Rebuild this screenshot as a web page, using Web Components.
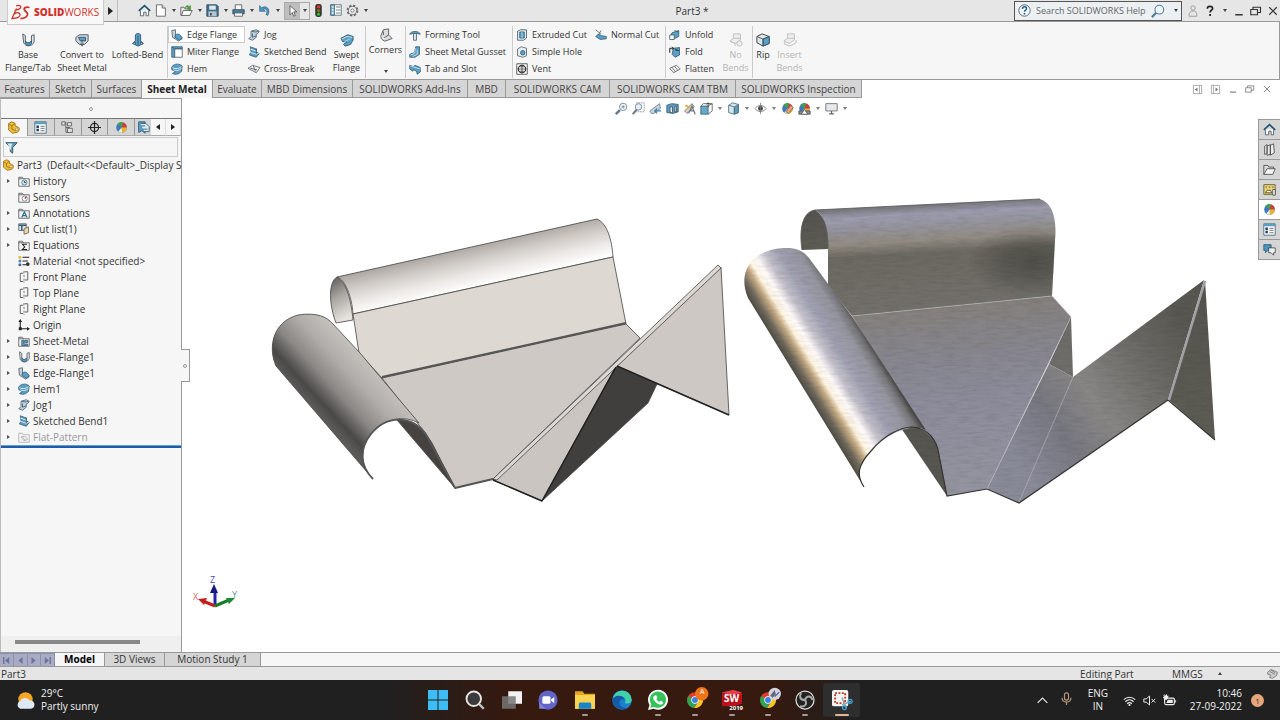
<!DOCTYPE html>
<html lang="en">
<head>
<meta charset="utf-8">
<title>Part3</title>
<style>
html,body{margin:0;height:100%}
body{font-family:"Open Sans","Noto Sans",sans-serif;font-size:10px;color:#333;background:#fff;overflow:hidden}
</style>
</head>
<body>
<cad-app></cad-app>
<script>
const S='fill="none" stroke="#44525c"', B='fill="#5a9fc4" stroke="#2b566f"', W='fill="#fff" stroke="#44525c"';
const chrome='<circle cx="8" cy="8" r="7" fill="#e33b2e"/><path d="M8 8L2 4.400A7 7 0 0 0 7 15l4-6z" fill="#30a452"/><path d="M8 4.800h6.300A7 7 0 0 1 7.400 15L11 9.500z" fill="#f9c722"/><circle cx="8" cy="8" r="3.300" fill="#fff"/><circle cx="8" cy="8" r="2.600" fill="#3c7fe8"/>';
const ball='<circle cx="8" cy="8" r="6.500" fill="#3b78c4"/><path d="M8 8L3 3.500A6.500 6.500 0 0 1 10 1.700z" fill="#3fa34a"/><path d="M8 8l2-6.300A6.500 6.500 0 0 1 14.500 8z" fill="#d93a34"/><path d="M8 8h6.500A6.500 6.500 0 0 1 9 14.500z" fill="#e7b52d"/><path d="M8 8l1 6.500A6.500 6.500 0 0 1 4 13z" fill="#f4eccb"/>';
const folder='<path d="M1 3h5l1 2h8v10H1z" fill="#f4f4f4" stroke="#4c4c4c"/><path d="M1 5h6" stroke="#4c4c4c"/>';
const ICONS={
home:`<path d="M3 8v6.500h4V10h3v4.500h3V8" ${W}/><path d="M1 8.500L8 2l7 6.500" fill="none" stroke="#1d5673" stroke-width="2"/>`,
new:'<path d="M3 1h7l4 4v10H3z" fill="#fff" stroke="#555"/><path d="M10 1v4h4" fill="#ddd" stroke="#555"/>',
open:'<path d="M1 4h4l1 2h6v8H1z" fill="#e8e8e8" stroke="#555"/><path d="M4 8h11l-3 6H2z" fill="#fff" stroke="#555"/><path d="M6 5c1-3 4-4 5-2l2-1v5l-4-1 1-1c-1-2-3-1-4 0z" fill="#49a536" stroke="#2a7420" stroke-width=".5"/>',
save:`<path d="M1 1h12l2 2v12H1z" fill="#3f6f8b" stroke="#2a4655"/><path d="M4 2h8v5H4z" fill="#dde9f0"/><path d="M3 9h10v6H3z" fill="#b6c4cc"/><path d="M5 11h2v3H5z" fill="#345"/>`,
print:`<path d="M4 7V1h8v6" ${W}/><path d="M1 7h14v5H1z" fill="#4c7f9c" stroke="#27485a"/><path d="M3 11h10v4H3z" fill="#fff" stroke="#44525c"/>`,
undo:'<path d="M2 2v7h7L6.500 6.700C10 5 12.500 8 10 13l2 1C16 7 11 1 4.500 4.500z" fill="#4f98bf" stroke="#28617f" stroke-width=".8"/>',
cursor:'<path d="M4 1v12l3-3 2 5 2-1-2-5h4z" fill="#fff" stroke="#444"/>',
traffic:'<rect x="4" y="0" width="8" height="16" rx="3" fill="#333"/><circle cx="8" cy="3.500" r="2" fill="#e33"/><circle cx="8" cy="8" r="2" fill="#777722"/><circle cx="8" cy="12.500" r="2" fill="#3b3"/>',
props:'<path d="M1 1h14v14H1z" fill="#fff" stroke="#3a6074"/><path d="M1 1h5v14H1z" fill="#7db3d0" stroke="#3a6074"/><path d="M2.500 4h2M2.500 8h2M2.500 12h2" stroke="#fff" stroke-width="2"/><path d="M8 4h6M8 8h6M8 12h6" stroke="#555"/>',
gear:'<circle cx="8" cy="8" r="6" fill="none" stroke="#666" stroke-width="2.500" stroke-dasharray="2.700 2"/><circle cx="8" cy="8" r="5" fill="#eee" stroke="#666"/><circle cx="8" cy="8" r="2" fill="#fff" stroke="#666"/>',
help:'<circle cx="8" cy="8" r="7" fill="#f4fafd" stroke="#3b4c58"/><path d="M5.500 6c0-3.500 5-3 5-.5 0 2-2.500 2-2.500 4" fill="none" stroke="#2b6389" stroke-width="1.800"/><path d="M7 11h2v2H7z" fill="#2b6389"/>',
mag:'<path d="M6.500 9.500L1 15" stroke="#537c96" stroke-width="2.500"/><circle cx="9.500" cy="6.500" r="5" fill="#edf6fb" stroke="#537c96" stroke-width="1.200"/>',
user:'<circle cx="8" cy="4" r="3" fill="none" stroke="#888"/><path d="M3 15c-1-5 2-7 5-7s6 2 5 7z" fill="none" stroke="#888"/>',
q:'<path d="M4.500 5c0-4.500 7-4 7-.5C11.500 7 8 7 8 10" fill="none" stroke="#222" stroke-width="2.200"/><path d="M7 12h2.300v2.500H7z" fill="#222"/>',
min:'<path d="M3 13h10" stroke="currentColor" stroke-width="2"/>',
restore:'<path d="M1 6h9v7H1zM4 6V3h10v7h-4" fill="none" stroke="currentColor" stroke-width="1.500"/>',
close:'<path d="M3 3l10 10M13 3L3 13" stroke="currentColor" stroke-width="1.600"/>',
dockl:'<path d="M2 2h12v12H2zM11 2v12" fill="none" stroke="#888"/><path d="M8 5v6L4 8z" fill="#777"/>',
dockr:'<path d="M2 2h12v12H2zM5 2v12" fill="none" stroke="#888"/><path d="M8 5v6l4-3z" fill="#777"/>',
base:`<path d="M2 1l3 2v6c1 3 5 3 7 0V3l3-1v8c-2 6-10 6-12 1z" fill="#dfe5e9" stroke="#44525c"/><path d="M5 9c1 3 5 3 7 0v3c-2 3-6 3-7 0z" ${B}/>`,
convert:`<path d="M1 5l4-3h10v7l-4 4H5l-4-4z" fill="#cfd6da" stroke="#44525c"/><path d="M4 5h8v4H6z" ${B}/><path d="M8 8v6m-2-2l2 3 2-3" ${S}/>`,
loft:`<path d="M5 2c2-2 4-2 6 0v7l3 3-6 3-6-3 3-3z" ${B}/><path d="M8 3v11" stroke="#2b566f"/><path d="M2 12l3-2v3zM14 12l-3-2v3z" fill="#fff" stroke="#2b566f"/>`,
edge:`<path d="M1 2l5-1v8l9 4-5 3L2 11z" fill="#c5d3dc" stroke="#44525c"/><path d="M6 8c4-3 7 0 9 4l-4 3-6-4z" ${B}/>`,
miter:`<path d="M1 1h14v3H5v11H1z" ${B}/><path d="M5 4h10v11H5zM1 1l4 3" ${W}/>`,
hem:`<path d="M1 5c4-5 11-4 14-1l-1 7c-3 4-8 5-12 3l4-3-5-2z" ${B}/><path d="M2 6c4 3 9 1 12-1M3 9c4 2 8 1 11-2" fill="none" stroke="#fff"/>`,
jog:`<path d="M4 3l7-2 4 2-2 3-2 1v4l-5 4-5-2 3-3V6z" fill="#b6d2e2" stroke="#44525c"/><path d="M5 3l5 1 4-1M6 6v5l5-2" ${S}/>`,
sketch:`<path d="M3 1l8 3v4l4 2-4 5-9-3 2-4z" ${B}/><path d="M2 8l9 3 4-2M3 4l8 3" stroke="#fff" fill="none"/><path d="M11 3v8" ${S}/>`,
cross:`<path d="M0 7l6-4 10 3-5 7z" fill="#eceff1" stroke="#555"/><path d="M3 7l9 2M7 4l3 7" ${S}/>`,
swept:`<path d="M1 6l8-4 6 2v4l-3 5-6 2-2-2 4-3H3z" ${B}/><path d="M2 7l6-3 6 1M5 10l6-3" fill="none" stroke="#d3e6f0"/>`,
corners:`<path d="M5 2l6-1v7l4 4-8 3c-4-1-5-4-5-6z" fill="#ddd" stroke="#555"/><path d="M11 8l-5 3M5 4v4" ${S}/>`,
forming:`<path d="M1 7c1-5 13-5 14 0l-4-1H5z" ${B}/><path d="M6 6h4v9H6z" fill="#dbe1e4" stroke="#44525c"/>`,
gusset:`<path d="M9 1h5v10l-6 4H1V11l6-2z" ${B}/><path d="M9 3l-2 7-5 2M11 5v6l-6 3" fill="none" stroke="#dcebf3"/>`,
tabslot:`<path d="M1 3l5 2 2-2 7 3v6l-4 3-1-4-4-2-1 2-4-3z" ${B}/><path d="M2 4l13 4" stroke="#dcebf3"/>`,
extrude:`<path d="M2 3l4-2h8v11l-4 3H2z" fill="#dce5ea" stroke="#44525c"/><path d="M5 4h6v8H5z" ${B}/><path d="M8 4v8" stroke="#d3e6f0"/>`,
hole:`<path d="M2 4l5-3 7 2v10l-5 2-7-2z" fill="#e9eef1" stroke="#44525c"/><circle cx="9" cy="9" r="3" ${B}/>`,
vent:'<path d="M1 1h14v14H1z" fill="#fff" stroke="#333"/><circle cx="8" cy="8" r="5" fill="none" stroke="#333" stroke-width="1.500"/><path d="M8 2v12M2 8h12M4 5h8M4 11h8" stroke="#333"/>',
normal:`<path d="M1 1l7 6M8 2L4 9" stroke="#44525c"/><path d="M4 7l5 2 6 1v3l-8 1-6-4z" ${B}/>`,
unfold:`<path d="M4 5l9-3v8l-8 4-4-3z" ${B}/><path d="M1 8h6v6H1zM7 2l6 2" ${W}/>`,
fold:`<path d="M6 3l8-1v10l-6 3-4-4z" ${B}/><path d="M1 9V3h5M4 1l2 2-2 2M8 5l5 1" fill="none" stroke="#222" stroke-width="1.300"/>`,
flatten:'<path d="M1 7l9-4 5 5-9 5zM4 6l5 6M7 4l5 6" fill="#f4f4f4" stroke="#555"/>',
nobend:'<path d="M5 1h8v7l-6 4-6-3 4-3z" fill="#eee" stroke="#bbb"/><path d="M5 6h8M2 10l5 2v3" fill="none" stroke="#bbb"/><circle cx="12" cy="12" r="3" fill="#eee" stroke="#bbb"/>',
insbend:'<path d="M5 1h8v7l-6 4-6-3 4-3z" fill="#eee" stroke="#bbb"/><path d="M5 6h8M2 10v3l6 2 7-4V8" fill="none" stroke="#bbb"/>',
rip:`<path d="M1 4l6-3 8 3v8l-7 3-7-4z" fill="#dfe5e9" stroke="#333"/><path d="M8 7l7-3v8l-7 3z" ${B}/><path d="M1 4l7 3 7-3M8 7v8" ${S}/>`,
zoomfit:'<path d="M6 10l-5 5" stroke="#66798a" stroke-width="3"/><circle cx="10" cy="6" r="4.500" fill="#eef6fa" stroke="#66798a"/><path d="M8 6h4M10 4v4" stroke="#66798a"/>',
zoomarea:'<path d="M6 9l-5 6" stroke="#66798a" stroke-width="2.500"/><path d="M5 1h10v11H5" fill="none" stroke="#888" stroke-dasharray="2 1"/><circle cx="8" cy="6" r="4" fill="#e2f0f6" stroke="#66798a"/>',
prev:'<path d="M1 11L13 2l1 6-8 6H3z" fill="#c8d4da" stroke="#66798a"/><path d="M7 11h8m-5-3l-3 3 3 3" fill="none" stroke="#3e82a7" stroke-width="1.600"/>',
section:`<path d="M1 4l6-2 8 1v9l-6 2-8-1z" ${B}/><path d="M5 6h3v7H5zM11 5h2v7h-2z" fill="#e8eff3" stroke="#44525c"/>`,
dynview:'<path d="M2 11l9-9 3 4-9 8z" fill="#d9d2c0" stroke="#766"/><path d="M3 4l5 3" stroke="#e6a32b" stroke-width="2"/><path d="M7 14l4-9 4 10M9 11h5" fill="none" stroke="#66798a" stroke-width="1.500"/>',
orient:`<path d="M1 5h9v10H1z" fill="#67a8c8" stroke="#3b5f72"/><path d="M1 5l3-3h11v9l-5 4M10 5l5-3" fill="none" stroke="#555"/><path d="M10 6V1m-2 2l2-2 2 2" fill="none" stroke="#333"/>`,
cube:'<path d="M2 4l5-3 7 2v10l-5 2-7-2z" fill="#d2e6f0" stroke="#4b6b7b"/><path d="M9 6l5-3v10l-5 2z" fill="#5c9cbc" stroke="#4b6b7b"/><path d="M2 4l7 2v9" fill="none" stroke="#4b6b7b"/>',
eye:'<path d="M1 8c4-5 10-5 14 0-4 5-10 5-14 0z" fill="#fff" stroke="#777"/><circle cx="8" cy="8" r="3" fill="#444"/><path d="M8 1v14" stroke="#777"/>',
appear:ball+'<path d="M6 12l6-8 3 3-6 7z" fill="#eaa48c" stroke="#864"/>',
scene:ball+'<path d="M1 11h14v4H1z" fill="#888" stroke="#555"/><path d="M4 15l4-6 4 6z" fill="#fff" stroke="#555"/>',
monitor:'<path d="M1 2h14v9H1z" fill="#e5e9ec" stroke="#666"/><path d="M8 11v3M5 14.500h6" stroke="#666" stroke-width="1.500"/>',
ball,
part:'<path d="M2 8V3l4-2 4 2v3l3 1c3 1 3 6-1 7l-5 1-5-4z" fill="#f0bd3a" stroke="#916a10"/><path d="M2 4l4 2 4-3M6 6v4l5 2" fill="none" stroke="#916a10"/><circle cx="12" cy="10" r="1.500" fill="#fff" stroke="#916a10" stroke-width=".7"/>',
config:'<path d="M2 2h4v12h8M6 8h5" fill="none" stroke="#555"/><path d="M1 1h4v4H1zM8 2h5v4H8zM8 9h6v5H8z" fill="#e5e5e5" stroke="#555"/>',
target:'<circle cx="8" cy="8" r="5" fill="none" stroke="#222" stroke-width="1.500"/><path d="M8 0v16M0 8h16" stroke="#222" stroke-width="1.500"/>',
cam:`<path d="M2 1h8v14l-4-3-4 2z" ${B}/><path d="M4 3h7l4 4v6H9" fill="#dbeaf2" stroke="#2b566f"/><path d="M5 6h5M7 10h6" stroke="#2b566f"/>`,
funnel:'<path d="M1 2h14L9.500 8v7l-3-2V8z" fill="#5e9bbd" stroke="#2b4858"/><path d="M3 3h6L7.500 8v4z" fill="#d6e7f0"/>',
history:folder+'<circle cx="8.500" cy="10" r="3.500" fill="#cfe3ed" stroke="#387393"/><path d="M8.500 8v2h2" fill="none" stroke="#222"/>',
sensors:folder+'<circle cx="9" cy="10" r="3.500" fill="#fff" stroke="#777"/><path d="M9 10l2-2" stroke="#a22" stroke-width="1.500"/>',
annot:folder+'<path d="M5 14l3.500-7.500L12 14M6 11.500h5" fill="none" stroke="#2b6f95" stroke-width="1.600"/>',
cut:`<path d="M1 1h10v9H1z" fill="#dbe6ec" stroke="#3c5969"/><path d="M1 3h10M5 3v7" stroke="#3c5969" stroke-width="2"/><path d="M8 8l6-3v8l-6 2z" fill="#f0d5a0" stroke="#555"/>`,
eq:folder+'<path d="M12 7H6l3 3.500L6 14h6" fill="none" stroke="#222" stroke-width="1.400"/>',
material:'<circle cx="2.500" cy="3" r="2" fill="#e3b930"/><circle cx="2.500" cy="8" r="2" fill="#3e87c2"/><circle cx="2.500" cy="13" r="2" fill="#55657a"/><path d="M6 3h9M6 8h7M6 13h5" stroke="#222" stroke-width="1.600"/><circle cx="13" cy="12" r="2.500" fill="#333"/>',
plane:'<path d="M7 3H3v11h4M9 12h4V1H9" fill="none" stroke="#555" stroke-width="1.200"/><path d="M8 0v16" stroke="#555" stroke-dasharray="3 2"/>',
origin:'<path d="M3 2v11h10" fill="none" stroke="#222" stroke-width="1.500"/><path d="M3 0l2.500 4h-5zM16 13l-4 2.500v-5z" fill="#222"/><path d="M1 11h4v4H1z" fill="#222"/>',
smetal:folder+'<path d="M5 7h3v5h5v2H5zM9 7h4v3H9z" fill="#5a9fc4" stroke="#2b566f"/>',
flatp:'<path d="M1 3h5l1 2h8v10H1z" fill="#f3f3f3" stroke="#aaa"/><path d="M4 8l5-1 4 4-5 2zM6 8l4 5" fill="none" stroke="#aaa"/>',
books:'<path d="M2 4l3-2v11l-3 1zM5 4l4-2v12l-4 1zM9 3l4-2 1 11-5 3z" fill="#eee" stroke="#444"/>',
folder:'<path d="M1 14V3h5l1 2h6v2" fill="#ddd" stroke="#444"/><path d="M1 14L5 7h10l-3 7z" fill="#f4f4f4" stroke="#444"/>',
palette:'<path d="M1 2h14v12H1z" fill="#e9d37a" stroke="#5d5326"/><path d="M3 5h2M7 5h2M11 5h2M3 12l2-3h4l2 3z" stroke="#4a3f12" fill="#fff"/><path d="M12 8h3v7h-3z" fill="#fff" stroke="#444"/>',
list:'<path d="M1 1h14v14H1z" fill="#fff" stroke="#3a6074"/><path d="M1 2.500h14" stroke="#5a9fc4" stroke-width="3"/><path d="M3 7h3M3 11h3" stroke="#1c3c63" stroke-width="3"/><path d="M8 6.500h5M8 9h5M8 12h5" stroke="#555"/>',
chat:'<path d="M1 2h9v7H6l-3 3V9H1z" fill="#4a93b9" stroke="#265a75"/><path d="M7 6h8v6h-2v3l-3-3H7z" fill="#eef5f8" stroke="#444"/>',
tick:'<path d="M1 6l5-4 9 4-1 5-6 4-4-1 1-4-4-1z" fill="#ccc" stroke="#666"/><path d="M4 5l7 4M6 3l6 4" stroke="#666"/>',
first:'<path d="M4 3v10" stroke="#6d7396" stroke-width="2"/><path d="M12 3v10L6 8z" fill="#6d7396"/>',
back:'<path d="M11 3v10L5 8z" fill="#6d7396"/>',
fwd:'<path d="M5 3v10l6-5z" fill="#6d7396"/>',
last:'<path d="M12 3v10" stroke="#6d7396" stroke-width="2"/><path d="M4 3v10l6-5z" fill="#6d7396"/>',
win:'<path d="M0 0h7.600v7.600H0zM8.400 0H16v7.600H8.400zM0 8.400h7.600V16H0zM8.400 8.400H16V16H8.400z" fill="#3cbdf5"/>',
wsearch:'<path d="M11 11l4 4" stroke="#c9c9c9" stroke-width="1.800"/><circle cx="7" cy="7" r="5.800" fill="#3a3a3a" stroke="#e5e5e5" stroke-width="1.500"/>',
task:'<path d="M5 1h11v10H5z" fill="#f2f2f2"/><path d="M0 5h11v10H0z" fill="#777" opacity=".85"/>',
teams:'<circle cx="8" cy="8" r="7.700" fill="#6264c7"/><path d="M1 15v-5l5 5z" fill="#8286e2"/><rect x="3.500" y="5" width="6.500" height="6" rx="1.200" fill="#fff"/><path d="M10.500 7.500L13 5.500v5l-2.500-2z" fill="#fff"/>',
explorer:'<path d="M0 1h6l1.500 2H16v12H0z" fill="#e2a71e"/><path d="M0 4h16v11H0z" fill="#fbd352"/><path d="M3 12c0-2 1-2 2-2h6c1 0 2 0 2 2v3H3z" fill="#1a83c9"/>',
edgeb:'<circle cx="8" cy="8" r="7.800" fill="#1b7fcc"/><path d="M0.500 7A7.700 7.700 0 0 1 15.800 8c0 3-5 3.500-5.600 2C12 8 10 5 7 5 4 5 1 6 .5 7z" fill="#42d0a8"/><path d="M.4 8C1 4 9 3 10 8c-3-2-5 1-3.500 4 1 2 4 3 6 2A7.600 7.600 0 0 1 .4 8z" fill="#155aa8"/>',
whats:'<path d="M0 16l1.200-4A8 8 0 1 1 4.500 15z" fill="#fff"/><path d="M1.800 14.200l.8-2.800A6.500 6.500 0 1 1 5 13.500z" fill="#35c25a"/><path d="M5 4.500l1.500-.5 1 2.200-.8 1c.6 1.200 1.200 1.800 2.400 2.300l1-1 2 1c0 2-1.500 2.500-3 2-2.500-.8-5-3.500-5-5.500z" fill="#fff"/>',
chromea:chrome+'<circle cx="14" cy="2.500" r="6" fill="#ee7417"/>',
chromeb:chrome+'<circle cx="14" cy="2.500" r="5.500" fill="#d5d6dd"/><path d="M10 4l4-5 1 4-3 3z" fill="#667"/><path d="M14 5l4-4" stroke="#345ab0"/>',
sw:'<path d="M0 2l9-2 7 2v9l-6 2H0z" fill="#b9121b"/><path d="M0 2l9-2 7 2-8 2z" fill="#e8404a"/>',
obs:'<circle cx="8" cy="8" r="7.200" fill="#222" stroke="#ddd"/><path d="M8 8C4 8 3 5 5 2.500M8 8c1-3.500 5-4 6 0M8 8c2 3 0 6-4 5" fill="none" stroke="#aaa" stroke-width="1.600"/>',
snip:'<rect x="0" y="0" width="13" height="13" rx="1.500" fill="#f5f5f5"/><path d="M2.500 2.500h8v8h-8z" fill="none" stroke="#c23b22" stroke-width="1.500" stroke-dasharray="1.500 1.200"/><path d="M8 6l3 8M8 12l7-3" stroke="#9aa" stroke-width="1.300"/><circle cx="10" cy="14" r="1.600" fill="none" stroke="#34a3d9"/><circle cx="14.500" cy="9" r="1.600" fill="none" stroke="#34a3d9"/>',
sun:'<circle cx="8" cy="7" r="6" fill="#f5a623"/><path d="M3.500 15a3.500 3.500 0 0 1 0-6.500C5 5 10 5 11.500 8c5-.5 5.500 6.500 1 7z" fill="#dfe9f5"/>',
chev:'<path d="M2 11l6-6 6 6" fill="none" stroke="#eee" stroke-width="1.300"/>',
mic:'<rect x="5.500" y="1" width="5" height="9" rx="2.500" fill="none" stroke="#b9977c" stroke-width="1.400"/><path d="M2.500 7c0 7 11 7 11 0M8 12.500V16" fill="none" stroke="#b9977c" stroke-width="1.400"/>',
wifi:'<path d="M1 7c4-4 10-4 14 0M3 9.500c3-3 7-3 10 0M5.200 12c1.600-1.800 4-1.800 5.600 0" fill="none" stroke="#eee" stroke-width="1.500"/><circle cx="8" cy="13.500" r="1.300" fill="#eee"/>',
mute:'<path d="M1 6h3l4-3.500v11L4 10H1zM10.500 6l4.500 4.500M15 6l-4.500 4.500" fill="none" stroke="#eee" stroke-width="1.200"/>',
batt:'<rect x="2" y="5" width="12" height="8" rx="1.500" fill="none" stroke="#eee" stroke-width="1.400"/><path d="M6 7h6v4H4z" fill="#eee"/><path d="M0 2l2 0 0-2M5 0v2h2L5 7H2L0 4z" fill="#eee"/><path d="M15.500 7.500v3" stroke="#eee"/>',
ds:'<path d="M5 2C9 .5 11 2.500 9 4.500 8 5.500 6 6 3.500 6.300M5.500 4.500L1 14.500c5.500 0 8.500-1.500 8-4C8.700 8.500 6 8 3.500 10" fill="none" stroke="#cf342c" stroke-width="1.300"/><path d="M18.500 3.500c-4-1-6 .5-5 2.500s4 2.500 3 5-3.500 3.500-7 3.500" fill="none" stroke="#cf342c" stroke-width="1.800"/>'
};

/* Registers an element whose shadow root is built from a stylesheet and markup. */
function define(name,css,html){
  customElements.define(name,class extends HTMLElement{
    connectedCallback(){
      if(this.shadowRoot)return;
      const t=document.createElement('template');
      t.innerHTML=`<style>*{box-sizing:border-box}button{font:inherit;color:inherit;background:none;border:0;padding:0;margin:0}${css}</style>`+(typeof html==='function'?html(this):html);
      this.attachShadow({mode:'open'}).append(t.content.cloneNode(true));
    }
  });
}
const ic=(n,s=13)=>`<cad-icon name="${n}" size="${s}"></cad-icon>`;
const ib=(n,l,s=13)=>`<button aria-label="${l}">${ic(n,s)}</button>`;

define('cad-icon',':host{display:inline-flex;flex:none}svg{display:block;overflow:visible}',e=>{
  const s=e.getAttribute('size')||13, n=e.getAttribute('name');
  return `<svg aria-hidden="true" width="${n==='ds'?s*1.25:s}" height="${s}" viewBox="0 0 ${n==='ds'?20:16} 16">${ICONS[n]}</svg>`});

define('cad-caret',':host{display:flex;justify-content:center;align-items:center;width:13px}i{border:2px solid transparent;border-top:3px solid #444;border-bottom:0}','<i></i>');

define('cad-title-bar',`
:host{display:flex;position:relative;z-index:2;height:22px;background:#e6e6e6;border-bottom:1px solid #999;align-items:center}
.logo{position:absolute;left:7px;top:0;width:97px;height:25px;background:#f8f8f8;border:1px solid #ccc;border-top:0;display:flex;align-items:center;gap:3px;padding-left:3px;color:#cf342c;white-space:nowrap}
.logo b{font-weight:800}
.left{display:flex;width:375px;height:100%;align-items:center;padding-left:104px;flex:none}
.play{width:14px;height:100%;display:grid;place-items:center;border-right:1px solid #bbb;margin-right:20px}
.play i{border:4px solid transparent;border-left:5px solid #222;border-right:0}
button{display:flex}.home{margin-right:3px}
.sel{display:flex;align-items:center;height:18px;width:26px;border:1px solid #aaa;margin-right:2px}.sel button{background:#bdbdbd;height:100%;width:15px;align-items:center;justify-content:center}
.sel cad-caret{width:9px}
.tail{display:flex;gap:4px;margin-left:5px}
h1{flex:1;text-align:center;font-size:10px;font-weight:400;margin:0}
.search{display:flex;align-items:center;width:168px;height:20px;border:1px solid #555;background:#ecf0f3;padding-left:3px;gap:5px}
.search cad-caret{width:11px}
input{flex:1;min-width:0;border:0;background:none;font-size:9px;font-family:inherit;padding:0;outline:0}input::placeholder{color:#666;opacity:1}
.right{display:flex;width:271px;padding-left:5px;align-items:center;flex:none;color:#333}
.acts{display:flex;align-items:center;margin-left:5px;gap:5px}.acts cad-caret{width:7px}
`,`<div class="logo">${ic('ds',16)}<span><b>SOLID</b>WORKS</span></div>
<div class="left"><button class="play" aria-label="Menu"><i></i></button><button class="home" aria-label="Home">${ic('home')}</button>
${['new','open','save','print','undo'].map(n=>ib(n,n)+'<cad-caret></cad-caret>').join('')}
<div class="sel">${ib('cursor','Select',12)}<cad-caret></cad-caret></div>${ib('traffic','Rebuild',13)}<div class="tail">${ib('props','File properties',12)}${ib('gear','Options',13)}</div><cad-caret></cad-caret></div>
<h1>Part3 *</h1>
<div class="right"><label class="search">${ic('help',13)}<input aria-label="Search SOLIDWORKS Help" placeholder="Search SOLIDWORKS Help">${ic('mag',14)}<cad-caret></cad-caret></label>
<div class="acts">${ib('user','Account',12)}${ib('q','Help',12)}<cad-caret></cad-caret>${ib('min','Minimise',12)}${ib('restore','Restore',12)}${ib('close','Close',12)}</div></div>`);

define('cad-tool',`
:host{display:block}button{display:flex;align-items:center;gap:4px;height:17px;width:100%;padding-left:2px;white-space:nowrap;font-size:9px;border:1px solid transparent;text-align:left;line-height:13px}
:host([active]) button{background:#fff;border-color:#ccc}
:host([big]) button{flex-direction:column;height:auto;gap:1px;padding:0;text-align:center;border:0;align-items:center}
:host([disabled]) button{color:#b5b5b5}
`,e=>`<button ${e.hasAttribute('disabled')?'disabled':''}>${ic(e.getAttribute('icon'),e.hasAttribute('big')?14:12)}<span><slot></slot></span></button>`);

define('cad-ribbon',`
:host{display:flex;height:58px;background:#f6f6f6;border-bottom:1px solid #999;border-right:1px solid #999;padding-top:4px}
section{display:flex;height:52px;border-right:1px solid #ccc}section:last-child{border:0}
.col{display:flex;flex-direction:column}
cad-tool[big]{padding-top:7px}
.w20{width:20px}.w33{width:33px}.w37{width:37px}.w39{width:39px}.w53{width:53px}.w56{width:56px}.w59{width:59px}.w52{width:52px}.w77{width:77px}.w79{width:79px}.w83{width:83px}.w73{width:73px}.w106{width:106px}
.cor{display:flex;flex-direction:column;align-items:center;justify-content:space-between;padding-bottom:5px}.cor cad-tool{padding-top:2px}
`,`<section><cad-tool big class="w56" icon="base">Base<br>Flange/Tab</cad-tool><cad-tool big class="w52" icon="convert">Convert to<br>Sheet Metal</cad-tool><cad-tool big class="w59" icon="loft">Lofted-Bend</cad-tool></section>
<section><div class="col w77"><cad-tool active icon="edge">Edge Flange</cad-tool><cad-tool icon="miter">Miter Flange</cad-tool><cad-tool icon="hem">Hem</cad-tool></div>
<div class="col w83"><cad-tool icon="jog">Jog</cad-tool><cad-tool icon="sketch">Sketched Bend</cad-tool><cad-tool icon="cross">Cross-Break</cad-tool></div>
<cad-tool big class="w37" icon="swept">Swept<br>Flange</cad-tool></section>
<section><div class="cor w39"><cad-tool big icon="corners">Corners</cad-tool><cad-caret></cad-caret></div></section>
<section><div class="col w106"><cad-tool icon="forming">Forming Tool</cad-tool><cad-tool icon="gusset">Sheet Metal Gusset</cad-tool><cad-tool icon="tabslot">Tab and Slot</cad-tool></div></section>
<section><div class="col w79"><cad-tool icon="extrude">Extruded Cut</cad-tool><cad-tool icon="hole">Simple Hole</cad-tool><cad-tool icon="vent">Vent</cad-tool></div><div class="col w73"><cad-tool icon="normal">Normal Cut</cad-tool></div></section>
<section><div class="col w53"><cad-tool icon="unfold">Unfold</cad-tool><cad-tool icon="fold">Fold</cad-tool><cad-tool icon="flatten">Flatten</cad-tool></div><cad-tool big disabled class="w33" icon="nobend">No<br>Bends</cad-tool></section>
<section><cad-tool big class="w20" icon="rip">Rip</cad-tool><cad-tool big disabled class="w33" icon="insbend">Insert<br>Bends</cad-tool></section>`);

define('cad-tabs',`
:host{display:flex;height:18px;background:#fff;justify-content:space-between;align-items:stretch}
nav{display:grid;grid-template-columns:50px 42px 50px 71px 49px 91px 115px 38px 104px 126px 126px}
nav button{background:#d5d5d5;border-right:1px solid #999;border-bottom:1px solid #999;white-space:nowrap;color:#444}
nav button[aria-selected=true]{background:#f6f6f6;border-bottom:0;font-weight:700;color:#222}
.doc{display:flex;align-items:center;gap:7px;padding-right:8px;color:#888}.doc button{display:flex}
`,`<nav role="tablist">${['Features','Sketch','Surfaces','Sheet Metal','Evaluate','MBD Dimensions','SOLIDWORKS Add-Ins','MBD','SOLIDWORKS CAM','SOLIDWORKS CAM TBM','SOLIDWORKS Inspection'].map(t=>`<button role="tab" aria-selected="${t==='Sheet Metal'}">${t}</button>`).join('')}</nav>
<div class="doc">${ib('dockl','Dock left',11)}${ib('dockr','Dock right',11)}${ib('min','Minimise',10)}${ib('restore','Restore',10)}${ib('close','Close',10)}</div>`);

define('cad-node',`
:host{display:flex;align-items:center;height:16px;padding-left:3px;white-space:nowrap}
:host([root]){padding-left:1px}
i{width:12px;flex:none;display:flex;padding-left:3px}i::before{content:"";display:block;border:2px solid transparent;border-left:3px solid #555;border-right:0}
:host([leaf]) i::before{visibility:hidden}:host([root]) i{display:none}
span{padding-left:3px}:host([muted]){color:#999}
cad-icon{margin-left:2px}:host([root]) cad-icon{margin-left:0}
`,e=>`<i></i>${ic(e.getAttribute('icon'),12)}<span><slot></slot></span>`);

const nodes=[['history','History',1],['sensors','Sensors'],['annot','Annotations',1],['cut','Cut list(1)',1],['eq','Equations',1],['material','Material &lt;not specified&gt;'],['plane','Front Plane'],['plane','Top Plane'],['plane','Right Plane'],['origin','Origin'],['smetal','Sheet-Metal',1],['base','Base-Flange1',1],['edge','Edge-Flange1',1],['hem','Hem1',1],['jog','Jog1',1],['sketch','Sketched Bend1',1],['flatp','Flat-Pattern',1]];

define('cad-panel',`
:host{display:flex;flex-direction:column;position:relative;z-index:1;width:182px;flex:none;background:#f6f6f6;border-right:1px solid #999;border-left:1px solid #bbb;border-top:1px solid #999}
.grip{height:19px;display:grid;place-items:center}.grip i,.handle i{width:4px;height:4px;border:1px solid #999;border-radius:50%}
.tabs{display:flex;height:18px;border-top:1px solid #777;background:#d5d5d5}
.tabs button{width:27px;display:grid;place-items:center;border-right:1px solid #999;border-bottom:1px solid #aaa;overflow:hidden}
.tabs button:first-child{background:#f6f6f6;border-bottom:0}.tabs .part{width:16px;border-right:0}.tabs .ar{width:15px;background:#f6f6f6;border-right:1px solid #ddd}
.ar i{border:3px solid transparent}.l i{border-right:4px solid #222;border-left:0}.r i{border-left:4px solid #222;border-right:0}
.filter{display:flex;align-items:center;height:20px;margin:1px 3px 0 2px;border:1px solid #ccc;padding-left:1px}.filter input{flex:1;min-width:0;border:0;background:none;outline:0}
.bar{height:3px;background:#1c5ca8;border-top:1px solid #5f9fd8}
.scroll{margin-top:auto;height:16px;background:#efefef;padding:4px 14px}.scroll i{display:block;width:125px;height:4px;background:#888}
.handle{position:absolute;left:180px;top:250px;width:9px;height:33px;background:#f6f6f6;border:1px solid #999;border-left:0;display:grid;place-items:center}
`,`<div class="grip"><i></i></div><div class="tabs">${ib('part','Feature tree')}${ib('list','Properties')}${ib('config','Configurations')}${ib('target','Dimensions')}${ib('ball','Display')}<button class="part" aria-label="CAM">${ic('cam')}</button><button class="ar l" aria-label="Back"><i></i></button><button class="ar r" aria-label="Forward"><i></i></button></div>
<label class="filter">${ic('funnel',13)}<input aria-label="Filter"></label>
<div class="tree"><cad-node root icon="part">Part3&nbsp; (Default&lt;&lt;Default&gt;_Display S</cad-node>${nodes.map(([i,t,x])=>`<cad-node icon="${i}" ${x?'':'leaf'} ${i==='flatp'?'muted':''}>${t}</cad-node>`).join('')}</div><div class="bar"></div><div class="scroll"><i></i></div><button class="handle" aria-label="Collapse"><i></i></button>`);

define('cad-model',':host{display:block;height:100%}svg{display:block;width:100%;height:100%}',`
<svg viewBox="182 98 1098 554" role="img" aria-label="Sheet metal part"><defs>
<linearGradient id="a" gradientUnits="userSpaceOnUse" x1="460" y1="248" x2="474" y2="308"><stop offset="0" stop-color="#aaa5a1"/><stop offset=".22" stop-color="#cec9c5"/><stop offset=".45" stop-color="#eae7e4"/><stop offset=".68" stop-color="#fff"/><stop offset="1" stop-color="#e3dfda"/></linearGradient>
<linearGradient id="b" gradientUnits="userSpaceOnUse" x1="308" y1="402" x2="360" y2="354"><stop offset="0" stop-color="#5c5a58"/><stop offset=".14" stop-color="#4a4947"/><stop offset=".4" stop-color="#8a8785"/><stop offset=".7" stop-color="#b0aca9"/><stop offset="1" stop-color="#c4c0bc"/></linearGradient>
<linearGradient id="c" x1="0" y1="0" x2=".3" y2="1"><stop offset="0" stop-color="#5c5a57"/><stop offset=".5" stop-color="#aaa7a3"/><stop offset="1" stop-color="#e5e1dd"/></linearGradient>
<linearGradient id="d" gradientUnits="userSpaceOnUse" x1="930" y1="204" x2="936" y2="310"><stop offset="0" stop-color="#77767b"/><stop offset=".09" stop-color="#9c9caf"/><stop offset=".2" stop-color="#95949d"/><stop offset=".34" stop-color="#918b82"/><stop offset=".46" stop-color="#6c6962"/><stop offset="1" stop-color="#73716c"/></linearGradient>
<radialGradient id="d2" gradientUnits="userSpaceOnUse" cx="0" cy="0" r="1" gradientTransform="translate(1032 262) scale(64 36)"><stop offset="0" stop-color="#30332d" stop-opacity=".5"/><stop offset=".5" stop-color="#30332d" stop-opacity=".3"/><stop offset="1" stop-color="#30332d" stop-opacity="0"/></radialGradient>
<linearGradient id="e" gradientUnits="userSpaceOnUse" x1="800" y1="385" x2="870" y2="342"><stop offset="0" stop-color="#484842"/><stop offset=".1" stop-color="#716a5c"/><stop offset=".2" stop-color="#c6ab84"/><stop offset=".27" stop-color="#fff6e2"/><stop offset=".36" stop-color="#fffafa"/><stop offset=".47" stop-color="#c5c2cc"/><stop offset=".62" stop-color="#a0a1b2"/><stop offset=".83" stop-color="#95959f"/><stop offset=".93" stop-color="#77767a"/><stop offset="1" stop-color="#4c4a47"/></linearGradient>
<linearGradient id="f" gradientUnits="userSpaceOnUse" x1="950" y1="305" x2="965" y2="495"><stop offset="0" stop-color="#84817c"/><stop offset=".25" stop-color="#87868e"/><stop offset=".5" stop-color="#8c8c9b"/><stop offset="1" stop-color="#9595a1"/></linearGradient>
<linearGradient id="g" gradientUnits="userSpaceOnUse" x1="1010" y1="450" x2="1190" y2="330"><stop offset="0" stop-color="#8a8b99"/><stop offset=".25" stop-color="#787881"/><stop offset=".45" stop-color="#898785"/><stop offset=".75" stop-color="#6c6a66"/><stop offset="1" stop-color="#585751"/></linearGradient>
<linearGradient id="h" x1="0" y1="0" x2="0" y2="1"><stop offset="0" stop-color="#55544e"/><stop offset="1" stop-color="#5d5c55"/></linearGradient>
<filter id="n" x="0" y="0" width="1" height="1" color-interpolation-filters="sRGB"><feTurbulence type="fractalNoise" baseFrequency=".07 .4" numOctaves="2" seed="4"/><feColorMatrix values="0 0 0 0 .1  0 0 0 0 .1  0 0 0 0 .1  .18 0 0 0 -.07" result="t"/><feComposite in="t" in2="SourceGraphic" operator="in" result="u"/><feMerge><feMergeNode in="SourceGraphic"/><feMergeNode in="u"/></feMerge></filter>
</defs>
<g stroke="#444" stroke-width=".8" stroke-linejoin="round">
<path d="M336 323C329 305 328 282 337 277C347 283 351 300 353 320z" fill="url(#c)"/>
<path d="M337 277L597 219C607 223 612 240 613 257L353 314C352 297 345 279 337 277z" fill="url(#a)"/>
<path d="M353 314L613 257L626 324L382 378L359 353z" fill="#ddd8d2"/>
<path d="M382 378L626 324L640 338L493 479L455 488L427 435L415 420z" fill="#cec9c4"/>
<path d="M382 377L626 323" stroke="#555" stroke-width="1.800"/>
<path d="M397 420C412 418 425 432 432 443L455 488z" fill="#45423f"/>
<path d="M276 366C268 348 272 322 298 315C317 312 327 317 333 324L360 353L419 423C404 415 384 418 371 434C359 449 360 466 373 479z" fill="url(#b)"/>
<path d="M373 479C360 466 359 449 371 434C387 414 412 416 425 433L455 488L493 479" fill="none" stroke="#555" stroke-width="1.800"/>
<path d="M616 366L657 384L648 403L542 501z" fill="#403f3d"/>
<path d="M493 480L616 366L542 501z" fill="#cac5c1"/>
<path d="M617 366L721 267L729 415z" fill="#cdc8c4"/>
<path d="M493 479L718 265L721 268L497 480z" fill="#ddd8d3"/>
<path d="M617 366L729 415M493 480L542 501L616 367" fill="none" stroke="#222" stroke-width="1.500"/></g>
<g filter="url(#n)">
<path d="M802 250C799 230 802 212 815 210C826 217 829 232 828 249z" fill="url(#h)"/>
<path d="M815 210L1040 199C1053 203 1057 220 1055 240L1052 296L852 316L828 285V248C828 228 824 214 815 210z" fill="url(#d)"/>
<path d="M950 204L1040 199C1053 203 1057 220 1055 240L1052 296L950 306z" fill="url(#d2)"/>
<path d="M852 316L1052 296L1071 317L987 489L947 496L937 448L915 418z" fill="url(#f)"/>
<path d="M1071 317L1073 377L1049 364z" fill="#6f6d69"/>
<path d="M1049 364L1073 377L1204 280L1168 400L1019 503L987 489z" fill="url(#g)"/>
<path d="M1205 280L1215 440L1169 400z" fill="url(#h)"/>
<path d="M901 428C920 420 938 440 939 455L947 496z" fill="#575650"/>
<path d="M748 298C739 277 746 255 775 249C795 246 804 250 812 262L853 318L926 430C909 422 884 436 871 451C855 468 858 477 864 487z" fill="url(#e)"/></g>
<path d="M864 487C856 475 858 465 871 451C884 435 901 427 912 427C928 428 937 440 939 455L947 496L987 489L1019 503L1168 400L1215 440" fill="none" stroke="#33322f" stroke-width="1.200"/>
<path d="M1071 317L987 489M1073 377L1019 502M852 316L1052 296L1071 317" fill="none" stroke="#b0b0b4" stroke-width=".7"/><path d="M1205 281L1169 400" stroke="#a0a0a5" stroke-width="2.500"/>
<path d="M815 210L1040 199M802 250C799 230 802 212 815 210C826 217 828 232 828 248" fill="none" stroke="#555" stroke-width=".8"/>
<g stroke-width="3"><path d="M215 606V592" stroke="#2222a8"/><path d="M215 606L203 601" stroke="#c41e1e"/><path d="M215 606L229 600" stroke="#167a2a"/></g>
<path d="M214 584l4 9h-8z" fill="#18187e"/><path d="M198 599l9-1-3 7z" fill="#c41e1e"/><path d="M235 598l-9 0 3 6z" fill="#1d8a33"/>
<g font-family="Open Sans,sans-serif" font-size="9"><text x="210" y="583" fill="#4b4bb5">Z</text><text x="193" y="600" fill="#d66">X</text><text x="232" y="598" fill="#599">Y</text></g></svg>`);

define('cad-viewport',`
:host{display:block;position:relative;flex:1;min-width:0;background:#fff}
.hud{position:absolute;top:4px;left:0;right:0;display:flex;justify-content:center;align-items:center}.hud button{width:17px;display:flex;justify-content:center}.hud cad-caret{width:10px;opacity:.7}
.pane{position:absolute;right:0;top:21px;width:22px;border:1px solid #999;border-right:0;border-bottom:0}
.pane button{display:grid;place-items:center;width:100%;height:20px;background:#d5d5d5;border-bottom:1px solid #999}.pane button:nth-child(5){background:#fff}
`,`<cad-model></cad-model><div class="hud">${[['zoomfit'],['zoomarea'],['prev'],['section'],['dynview'],['orient',1],['cube',1],['eye',1],['appear'],['scene',1],['monitor',1]].map(([n,c])=>ib(n,n)+(c?'<cad-caret></cad-caret>':'')).join('')}</div>
<div class="pane">${['home','books','folder','palette','ball','list','chat'].map(n=>ib(n,n)).join('')}</div>`);

define('cad-status',`
:host{display:block}.tabs{display:grid;grid-template-columns:55px 50px 60px 96px 1fr;height:15px;background:#f6f6f6;border:1px solid #999;border-width:1px 0;line-height:13px}
.tabs>button{background:#d5d5d5;border-right:1px solid #999}.tabs>button.on{background:#f6f6f6;font-weight:700;color:#000}
.nav{display:flex;background:#a8abc3}.nav button{flex:1;display:grid;place-items:center;border:1px solid #8b8fac;border-width:1px 1px 0 0}
.st{display:flex;height:13px;background:#e5e5e5;line-height:14px;align-items:center;padding:0 2px 0 1px}.st span:first-child{flex:1}
.e{width:92px}.m{width:42px}.st cad-caret{transform:rotate(180deg);margin-right:40px}
`,`<div class="tabs"><div class="nav">${['first','back','fwd','last'].map(n=>ib(n,n,11)).join('')}</div><button class="on">Model</button><button>3D Views</button><button>Motion Study 1</button></div>
<div class="st"><span>Part3</span><span class="e">Editing Part</span><span class="m">MMGS</span><cad-caret></cad-caret>${ic('tick',11)}</div>`);

define('win-app',`
:host{display:block}button{position:relative;width:100%;height:34px;display:grid;place-items:center;border-radius:3px}
:host([active]) button{background:#2e2e2e}
i{position:absolute;bottom:1px;left:50%;margin-left:-3px;width:6px;height:2px;border-radius:1px;background:#a39a94}:host([active]) i{width:14px;margin-left:-7px;background:#e3b58c}
.badge{position:absolute;left:22px;top:4px;width:7px;text-align:center;font-size:7px;line-height:9px;color:#fff}
.s,.y{position:absolute;left:0;right:0;text-align:center;color:#fff;font-weight:700}.s{top:9px;font-size:10px;line-height:12px}.y{top:21px;left:9px;font-size:6px;line-height:8px}
`,e=>{const n=e.getAttribute('icon');return `<button aria-label="${n}">${ic(n,n==='chromea'||n==='chromeb'?18:20)}${n==='chromea'?'<span class="badge">A</span>':''}${n==='sw'?'<span class="s">SW</span><span class="y">2019</span>':''}${e.hasAttribute('run')?'<i></i>':''}</button>`});

define('win-taskbar',`
:host{display:grid;grid-template-columns:1fr 440px 1fr;height:40px;align-items:center;color:#f0f0f0;line-height:13px;background:linear-gradient(90deg,#202020 30%,#36190f 40%,#36190f 60%,#202020 67%)}
.w{display:flex;gap:6px;padding-left:16px;align-items:center}
.apps{display:grid;grid-template-columns:repeat(12,1fr)}
.tray{display:flex;justify-content:flex-end;align-items:center;padding-right:16px}
.tray>*{margin-left:7px}.tray .k{text-align:center;width:26px;margin:0 5px 0 12px}.tray .d{text-align:right;margin-left:14px}.tray .mic{margin-left:11px}
.tray .n{width:13px;height:13px;border-radius:50%;background:#e6a67c;color:#333;text-align:center;font-size:8px;margin-left:9px}
`,`<div class="w">${ic('sun',19)}<span>29°C<br>Partly sunny</span></div>
<div class="apps">${[['win'],['wsearch'],['task'],['teams'],['explorer',1],['edgeb'],['whats',1],['chromea',1],['sw',1],['chromeb',1],['obs',1],['snip',2]].map(([n,r])=>`<win-app icon="${n}" ${r?'run':''} ${r===2?'active':''}></win-app>`).join('')}</div>
<div class="tray">${ic('chev',13)}<span class="mic">${ic('mic',13)}</span><span class="k">ENG<br>IN</span>${ic('wifi',13)}${ic('mute',13)}${ic('batt',13)}<span class="d">10:46<br>27-09-2022</span><span class="n">1</span></div>`);

define('cad-app',':host{display:flex;flex-direction:column;height:100vh}main{flex:1;min-height:0;display:flex}',
'<cad-title-bar></cad-title-bar><cad-ribbon></cad-ribbon><cad-tabs></cad-tabs><main><cad-panel></cad-panel><cad-viewport></cad-viewport></main><cad-status></cad-status><win-taskbar></win-taskbar>');
</script>
</body>
</html>
